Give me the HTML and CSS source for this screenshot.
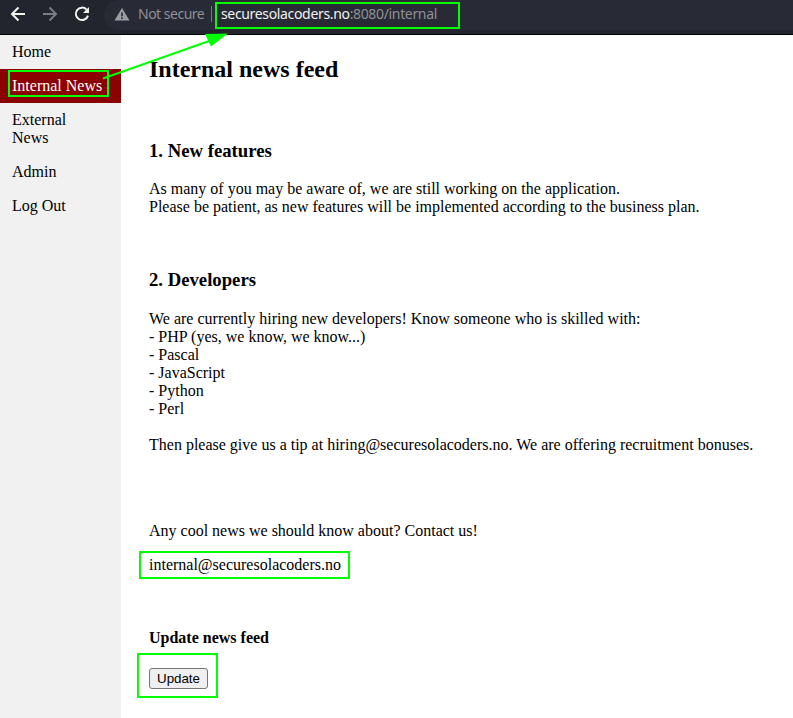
FILE: index.html
```html
<!DOCTYPE html>
<html lang="en">
<head>
<meta charset="utf-8">
<title>Internal news feed</title>
<link rel="stylesheet" href="styles.css">
</head>
<body>
<header class="toolbar">
  <svg class="nav-icons" width="100" height="34" viewBox="0 0 100 34" fill="none" stroke-width="2">
    <path stroke="#f1f1ee" d="M25 14H12M18.5 7.5L12 14l6.500 6.500"/>
    <path stroke="#7b7c80" d="M43 14h13M49.500 7.500L56 14l-6.500 6.500"/>
    <path stroke="#f1f1ee" d="M86.600 9.600A6.200 6.200 0 1 0 88 15.600"/>
    <path fill="#f1f1ee" d="M89 7v6h-6z"/>
  </svg>
  <div class="address">
    <svg class="warning" width="16" height="14" viewBox="0 0 16 14"><path fill="#9b9da3" d="M8 0L15.500 12.500H.500z"/><path fill="#282a35" d="M7.200 4.500h1.600v3.700H7.200zM7.200 9.300h1.600v1.600H7.200z"/></svg>
    <span class="security">Not secure</span>
    <span class="divider"></span>
    <span class="url marked"><span class="host">securesolacoders.no</span>:8080/internal</span>
  </div>
</header>
<div class="page">
  <nav class="sidebar">
    <a>Home</a>
    <a class="active"><span class="marked">Internal News</span></a>
    <a>External<br>News</a>
    <a>Admin</a>
    <a>Log Out</a>
  </nav>
  <main class="content">
    <h2>Internal news feed</h2>
    <br>
    <h3>1. New features</h3>
    <p>As many of you may be aware of, we are still working on the application.<br>
    Please be patient, as new features will be implemented according to the business plan.</p>
    <br>
    <h3 class="developers">2. Developers</h3>
    <p>We are currently hiring new developers! Know someone who is skilled with:<br>
    - PHP (yes, we know, we know...)<br>
    - Pascal<br>
    - JavaScript<br>
    - Python<br>
    - Perl<br><br>
    Then please give us a tip at hiring@securesolacoders.no. We are offering recruitment bonuses.</p>
    <br><br>
    <p>Any cool news we should know about? Contact us!</p>
    <p><span class="email marked">internal@securesolacoders.no</span></p>
    <br>
    <h4>Update news feed</h4>
    <div class="action marked"><button type="button">Update</button></div>
  </main>
</div>
<svg class="arrow" width="793" height="120" viewBox="0 0 793 120"><path stroke="#0f0" stroke-width="2" d="M103 78.500L212 40"/><path fill="#0f0" d="M228 33.500L205 34l6 12.500z"/></svg>
</body>
</html>
```
FILE: styles.css
```css
* { box-sizing: border-box; }
body {
  margin: 0;
  height: 718px;
  overflow: hidden;
  background: #fff;
  color: #000;
  font: 16px/18px "Liberation Serif", serif;
}
.toolbar {
  display: flex;
  height: 35px;
  background: #22242e;
  border-bottom: 1px solid #000;
}
.nav-icons { flex: none; }
.address {
  display: flex;
  align-items: center;
  flex: 1;
  height: 30px;
  margin-left: 4px;
  padding-left: 10px;
  background: #282a35;
  border-radius: 15px 0 0 15px;
  color: #8f9196;
  font: 14px/20px "Noto Sans", sans-serif;
  letter-spacing: -0.34px;
  white-space: nowrap;
}
.warning { flex: none; margin-top: -1px; }
.security { width: 73px; margin: -2px 0 0 8px; letter-spacing: -0.5px; }
.divider { width: 1px; height: 16px; margin-top: -2px; background: #777980; }
.marked { outline: 2px solid #0f0; }
.url {
  width: 241px;
  height: 23px;
  margin: 1px 0 0 5px;
  padding-left: 4px;
}
.host { color: #f1f1f1; }
.page { display: flex; height: 683px; }
.sidebar { width: 121px; flex: none; background: #f1f1f1; }
.sidebar a { display: block; padding: 8px 12px; }
.sidebar .active { background: #8b0000; color: #fff; }
.active .marked {
  display: block;
  width: 97px;
  height: 23px;
  margin: -5px 0 0 -2px;
  padding: 5px 0 0 2px;
  white-space: nowrap;
}
.content { flex: 1; padding-left: 28px; white-space: nowrap; }
h2 { margin: 21px 0 20px; font-size: 24px; line-height: 27px; }
h3 { margin: 19px 0; font-size: 18.72px; line-height: 21px; }
.developers { margin-bottom: 20px; }
h4 { margin: 21.28px 0; }
p { margin: 16px 0; }
.email { margin-left: -8px; padding: 3px 7px 4px 8px; }
.action {
  width: 77px;
  height: 41px;
  margin: -14px 0 0 -10px;
  padding: 13px 0 0 10px;
}
button {
  display: block;
  width: 59px;
  height: 21px;
  padding: 0;
  background: #efefef;
  border: 1px solid #767676;
  border-radius: 3px;
  color: #000;
  font: 13.333px "Liberation Sans", sans-serif;
}
.arrow { position: absolute; top: 0; left: 0; pointer-events: none; }
```
